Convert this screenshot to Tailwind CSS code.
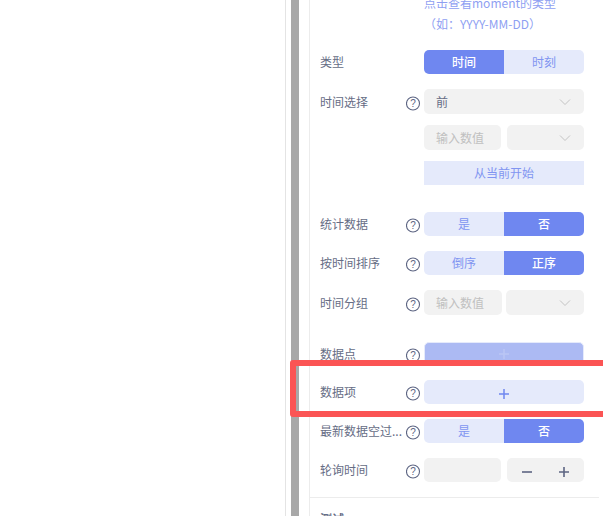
<!DOCTYPE html>
<html><head><meta charset="utf-8"><script src="https://cdn.jsdelivr.net/npm/@tailwindcss/browser@4"></script></head>
<body class="m-0 overflow-hidden bg-white font-['Noto_Sans_CJK_SC','Noto_Sans',sans-serif] text-[12px] text-[#666d85]">
<div class="relative flex h-[516px] w-[603px] overflow-hidden">
  <div class="h-full w-[286px] shrink-0 border-r border-[#e4e4e4]"></div>
  <div class="ml-[5px] h-full w-2 shrink-0 bg-[#a8a8a8]"></div>
  <div class="ml-[10px] h-full w-[294px] shrink-0 border-l border-[#ececec]">
    <div class="mt-[-7px] ml-[114px] h-[43px] text-[#8f9ff2]">
      <div class="h-[20px] leading-[20px] whitespace-nowrap">点击查看moment的类型</div>
      <div class="mt-[1px] h-[20px] leading-[20px] whitespace-nowrap">（如：YYYY-MM-DD）</div>
    </div>
    <div class="mt-[14px] flex h-[24px] items-center pl-[10px]">
      <span class="w-[104px] shrink-0">类型</span>
      <div class="flex h-full w-[160px] overflow-hidden rounded-[5px]">
        <div class="flex flex-1 items-center justify-center bg-[#6f87f0] font-medium text-white">时间</div>
        <div class="flex flex-1 items-center justify-center bg-[#e5eafb] text-[#8195f1]">时刻</div>
      </div>
    </div>
    <div class="mt-[15px] flex h-[25px] items-center pl-[10px]">
      <span class="w-[86px] shrink-0">时间选择</span>
      <svg class="mt-[3px] mr-[3px] size-[15px] shrink-0" viewBox="0 0 15 15" fill="none"><circle cx="7" cy="7.5" r="6.5" stroke="#5d6583" stroke-width="1.1"/><text x="7" y="11" text-anchor="middle" font-size="10" fill="#5d6583" font-family="Liberation Sans">?</text></svg>
      <div class="flex h-full w-[160px] items-center justify-between rounded-[5px] bg-[#f2f2f2] pl-[12px] pr-[13px]">
        <span>前</span>
        <svg class="size-[12px]" viewBox="0 0 12 12" fill="none"><path d="M1 3.5 6 8.5 11 3.5" stroke="#c4c4c4"/></svg>
      </div>
    </div>
    <div class="mt-[11px] ml-[114px] flex h-[25px] w-[160px] justify-between">
      <div class="flex w-[77px] items-center rounded-[5px] bg-[#f2f2f2] pl-[12px] text-[#c0c0c0]">输入数值</div>
      <div class="flex w-[77px] items-center justify-end rounded-[5px] bg-[#f2f2f2] pr-[13px]"><svg class="size-[12px]" viewBox="0 0 12 12" fill="none"><path d="M1 3.5 6 8.5 11 3.5" stroke="#c4c4c4"/></svg></div>
    </div>
    <div class="mt-[11px] ml-[114px] flex h-[24px] w-[160px] items-center justify-center bg-[#e5eafb] text-[#8195f1]">从当前开始</div>
    <div class="mt-[27px] flex h-[24px] items-center pl-[10px]">
      <span class="w-[86px] shrink-0">统计数据</span>
      <svg class="mt-[3px] mr-[3px] size-[15px] shrink-0" viewBox="0 0 15 15" fill="none"><circle cx="7" cy="7.5" r="6.5" stroke="#5d6583" stroke-width="1.1"/><text x="7" y="11" text-anchor="middle" font-size="10" fill="#5d6583" font-family="Liberation Sans">?</text></svg>
      <div class="flex h-full w-[160px] overflow-hidden rounded-[5px]">
        <div class="flex flex-1 items-center justify-center bg-[#e5eafb] text-[#8195f1]">是</div>
        <div class="flex flex-1 items-center justify-center bg-[#6f87f0] font-medium text-white">否</div>
      </div>
    </div>
    <div class="mt-[15px] flex h-[24px] items-center pl-[10px]">
      <span class="w-[86px] shrink-0">按时间排序</span>
      <svg class="mt-[3px] mr-[3px] size-[15px] shrink-0" viewBox="0 0 15 15" fill="none"><circle cx="7" cy="7.5" r="6.5" stroke="#5d6583" stroke-width="1.1"/><text x="7" y="11" text-anchor="middle" font-size="10" fill="#5d6583" font-family="Liberation Sans">?</text></svg>
      <div class="flex h-full w-[160px] overflow-hidden rounded-[5px]">
        <div class="flex flex-1 items-center justify-center bg-[#e5eafb] text-[#8195f1]">倒序</div>
        <div class="flex flex-1 items-center justify-center bg-[#6f87f0] font-medium text-white">正序</div>
      </div>
    </div>
    <div class="mt-[15px] flex h-[25px] items-center pl-[10px]">
      <span class="w-[86px] shrink-0">时间分组</span>
      <svg class="mt-[3px] mr-[3px] size-[15px] shrink-0" viewBox="0 0 15 15" fill="none"><circle cx="7" cy="7.5" r="6.5" stroke="#5d6583" stroke-width="1.1"/><text x="7" y="11" text-anchor="middle" font-size="10" fill="#5d6583" font-family="Liberation Sans">?</text></svg>
      <div class="flex h-full w-[160px] justify-between">
        <div class="flex w-[78px] items-center rounded-[5px] bg-[#f2f2f2] pl-[12px] text-[#c0c0c0]">输入数值</div>
        <div class="flex w-[78px] items-center justify-end rounded-[5px] bg-[#f2f2f2] pr-[13px]"><svg class="size-[12px]" viewBox="0 0 12 12" fill="none"><path d="M1 3.5 6 8.5 11 3.5" stroke="#c4c4c4"/></svg></div>
      </div>
    </div>
    <div class="mt-[27px] flex h-[24px] items-center pl-[10px]">
      <span class="w-[86px] shrink-0">数据点</span>
      <svg class="mt-[3px] mr-[3px] size-[15px] shrink-0" viewBox="0 0 15 15" fill="none"><circle cx="7" cy="7.5" r="6.5" stroke="#5d6583" stroke-width="1.1"/><text x="7" y="11" text-anchor="middle" font-size="10" fill="#5d6583" font-family="Liberation Sans">?</text></svg>
      <div class="flex h-full w-[160px] items-center justify-center rounded-[5px] border border-[#e5eafb] bg-[#acbaf3]"><svg class="size-[10px]" viewBox="0 0 10 10"><path d="M5 0V10M0 5H10" stroke="#bac6f5" stroke-width="1.5"/></svg></div>
    </div>
    <div class="mt-[14px] flex h-[24px] items-center pl-[10px]">
      <span class="w-[86px] shrink-0">数据项</span>
      <svg class="mt-[3px] mr-[3px] size-[15px] shrink-0" viewBox="0 0 15 15" fill="none"><circle cx="7" cy="7.5" r="6.5" stroke="#5d6583" stroke-width="1.1"/><text x="7" y="11" text-anchor="middle" font-size="10" fill="#5d6583" font-family="Liberation Sans">?</text></svg>
      <div class="flex h-full w-[160px] items-center justify-center rounded-[5px] bg-[#e5eafb]"><svg class="mt-[3px] size-[10px]" viewBox="0 0 10 10"><path d="M5 0V10M0 5H10" stroke="#6f87f0" stroke-width="1.5"/></svg></div>
    </div>
    <div class="mt-[15px] flex h-[24px] items-center pl-[10px]">
      <span class="w-[86px] shrink-0 whitespace-nowrap">最新数据空过...</span>
      <svg class="mt-[3px] mr-[3px] size-[15px] shrink-0" viewBox="0 0 15 15" fill="none"><circle cx="7" cy="7.5" r="6.5" stroke="#5d6583" stroke-width="1.1"/><text x="7" y="11" text-anchor="middle" font-size="10" fill="#5d6583" font-family="Liberation Sans">?</text></svg>
      <div class="flex h-full w-[160px] overflow-hidden rounded-[5px]">
        <div class="flex flex-1 items-center justify-center bg-[#e5eafb] text-[#8195f1]">是</div>
        <div class="flex flex-1 items-center justify-center bg-[#6f87f0] font-medium text-white">否</div>
      </div>
    </div>
    <div class="mt-[15px] flex h-[24px] items-center pl-[10px]">
      <span class="w-[86px] shrink-0">轮询时间</span>
      <svg class="mt-[3px] mr-[3px] size-[15px] shrink-0" viewBox="0 0 15 15" fill="none"><circle cx="7" cy="7.5" r="6.5" stroke="#5d6583" stroke-width="1.1"/><text x="7" y="11" text-anchor="middle" font-size="10" fill="#5d6583" font-family="Liberation Sans">?</text></svg>
      <div class="flex h-full w-[160px] justify-between">
        <div class="w-[77px] rounded-[5px] bg-[#f2f2f2]"></div>
        <div class="flex w-[77px] items-center justify-around rounded-[5px] bg-[#f2f2f2] px-[2px]">
          <svg class="mt-[3px] size-[10px]" viewBox="0 0 10 10"><path d="M0 5H10" stroke="#5d6583" stroke-width="1.6"/></svg>
          <svg class="mt-[3px] size-[10px]" viewBox="0 0 10 10"><path d="M5 0V10M0 5H10" stroke="#5d6583" stroke-width="1.6"/></svg>
        </div>
      </div>
    </div>
    <div class="mt-[15px] h-px w-[289px] bg-[#ececec]"></div>
    <div class="mt-[13px] pl-[10px] font-bold leading-[16px]">测试</div>
  </div>
  <div class="absolute top-[360px] left-[290px] h-[57px] w-[320px] rounded-[3px] border-[6px] border-[#fb5454]"></div>
</div>
</body></html>
